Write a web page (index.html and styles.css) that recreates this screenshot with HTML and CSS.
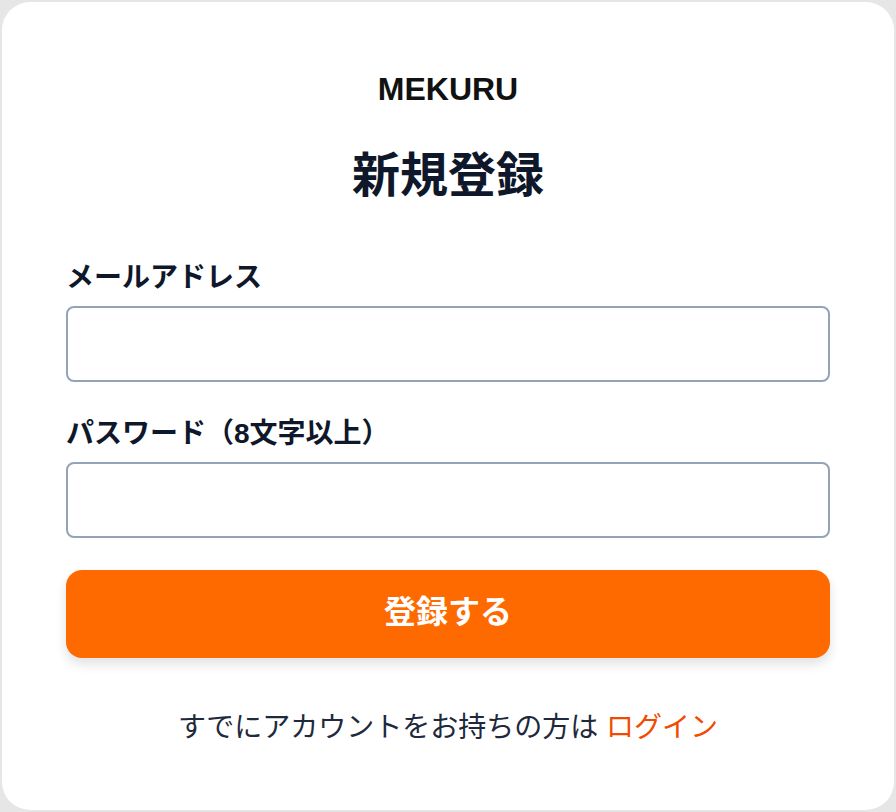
FILE: index.html
```html
<!DOCTYPE html>
<html lang="ja">
<head>
<meta charset="utf-8">
<title>新規登録 | MEKURU</title>
<link rel="stylesheet" href="styles.css">
</head>
<body>
<main class="card">
  <div class="brand">MEKURU</div>
  <h1 class="title">新規登録</h1>
  <form class="form">
    <label class="field">
      <span class="field-label">メールアドレス</span>
      <input class="field-input" type="email">
    </label>
    <label class="field">
      <span class="field-label">パスワード（8文字以上）</span>
      <input class="field-input" type="password">
    </label>
    <button class="submit" type="button">登録する</button>
  </form>
  <p class="footer">すでにアカウントをお持ちの方は <a class="login-link" href="#">ログイン</a></p>
</main>
</body>
</html>
```

FILE: styles.css
```css
* {
  box-sizing: border-box;
}

html,
body {
  margin: 0;
  height: 100%;
}

body {
  background: #e6e6e6;
  font-family: "Liberation Sans", "Noto Sans CJK JP", sans-serif;
  color: #0f172a;
  padding: 2px;
}

.card {
  height: 808px;
  background: #ffffff;
  border-radius: 28px;
  padding: 67px 64px 0;
  display: flex;
  flex-direction: column;
}

.brand {
  font-size: 32px;
  line-height: 40px;
  font-weight: 700;
  text-align: center;
  color: #111111;
}

.title {
  margin: 39px 0 0;
  font-size: 48px;
  line-height: 56px;
  font-weight: 700;
  text-align: center;
  color: #0f172a;
}

.form {
  margin-top: 56px;
  display: flex;
  flex-direction: column;
}

.field {
  display: flex;
  flex-direction: column;
  gap: 10px;
  margin-bottom: 34px;
}

.field:last-of-type {
  margin-bottom: 32px;
}

.field-label {
  font-size: 28px;
  line-height: 36px;
  font-weight: 700;
  color: #0f172a;
}

.field-input {
  display: block;
  width: 100%;
  height: 76px;
  border: 2px solid #94a3b8;
  border-radius: 8px;
  background: #ffffff;
  font: inherit;
  font-size: 24px;
  padding: 0 16px;
}

.submit {
  height: 88px;
  border: none;
  border-radius: 16px;
  background: #ff6a00;
  color: #ffffff;
  font-family: inherit;
  font-size: 32px;
  font-weight: 700;
  padding: 0 0 10px;
  box-shadow: 0 6px 12px rgba(0, 0, 0, 0.12);
}

.footer {
  margin: 50px 0 0;
  font-size: 28px;
  line-height: 40px;
  text-align: center;
  color: #1e293b;
}

.login-link {
  color: #f24a00;
  text-decoration: none;
}
```
